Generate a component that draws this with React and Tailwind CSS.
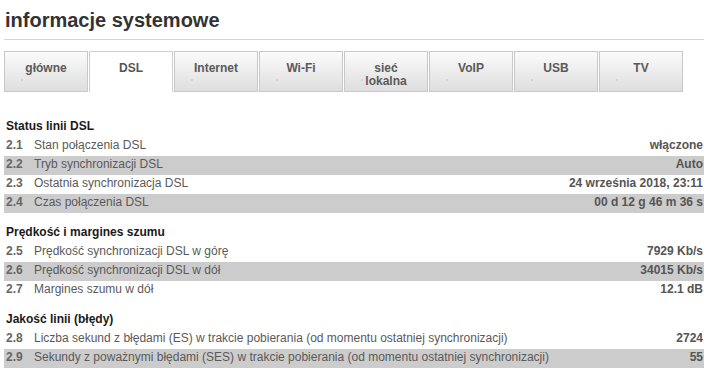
import React from "react";

const tabs = [
  { label: "główne" },
  { label: "DSL", active: true },
  { label: "Internet" },
  { label: "Wi-Fi" },
  { label: "sieć\nlokalna" },
  { label: "VoIP" },
  { label: "USB" },
  { label: "TV" },
];

const sections = [
  {
    title: "Status linii DSL",
    rows: [
      ["2.1", "Stan połączenia DSL", "włączone"],
      ["2.2", "Tryb synchronizacji DSL", "Auto"],
      ["2.3", "Ostatnia synchronizacja DSL", "24 września 2018, 23:11"],
      ["2.4", "Czas połączenia DSL", "00 d 12 g 46 m 36 s"],
    ],
  },
  {
    title: "Prędkość i margines szumu",
    rows: [
      ["2.5", "Prędkość synchronizacji DSL w górę", "7929 Kb/s"],
      ["2.6", "Prędkość synchronizacji DSL w dół", "34015 Kb/s"],
      ["2.7", "Margines szumu w dół", "12.1 dB"],
    ],
  },
  {
    title: "Jakość linii (błędy)",
    rows: [
      ["2.8", "Liczba sekund z błędami (ES) w trakcie pobierania (od momentu ostatniej synchronizacji)", "2724"],
      ["2.9", "Sekundy z poważnymi błędami (SES) w trakcie pobierania (od momentu ostatniej synchronizacji)", "55"],
    ],
  },
];

export default function App() {
  return (
    <div className="w-[710px] h-[370px] bg-white overflow-hidden font-['Liberation_Sans',Arial,sans-serif]">
      <div className="pl-[4px] pr-[6px]">
        <h1 className="pt-[9px] pl-[1px] text-[20px] leading-[23px] font-bold text-[#333333]">
          informacje systemowe
        </h1>
        <div className="mt-[7px] border-t border-[#d4d4d4]" />
        <div className="mt-[11px] flex gap-[1px]">
          {tabs.map((t) => (
            <div
              key={t.label}
              className={
                t.active
                  ? "relative w-[84px] h-[41px] border border-b-0 border-[#cfcfcf] bg-white pt-[10px] text-center text-[12px] leading-[13px] font-bold text-[#555555] whitespace-pre-line"
                  : "relative w-[84px] h-[41px] border border-[#c8c8c8] bg-gradient-to-b from-[#fbfbfb] to-[#dedede] pt-[10px] text-center text-[12px] leading-[13px] font-bold text-[#5a5a5a] whitespace-pre-line"
              }
            >
              {t.label}
              {!t.active && (
                <span className="absolute left-[16px] top-[27px] w-[2px] h-[2px] bg-[#d2d2d2]" />
              )}
            </div>
          ))}
        </div>

        {sections.map((s, si) => (
          <div key={s.title} className={si === 0 ? "mt-[27px]" : "mt-[12px]"}>
            <div className="pl-[2px] text-[12px] leading-[14px] font-bold text-[#1a1a1a] mb-[4px]">
              {s.title}
            </div>
            {s.rows.map((r, ri) => (
              <div
                key={r[0]}
                className={
                  ri % 2 === 1
                    ? "flex h-[19px] bg-[#cccccc] text-[12px] leading-[16px]"
                    : "flex h-[19px] text-[12px] leading-[16px]"
                }
              >
                <div className="w-[30px] pl-[2px] font-bold text-[#666666]">{r[0]}</div>
                <div className="flex-1 text-[#5a5a5a]">{r[1]}</div>
                <div className="pr-[1px] font-bold text-[#555555]">{r[2]}</div>
              </div>
            ))}
          </div>
        ))}
      </div>
    </div>
  );
}
